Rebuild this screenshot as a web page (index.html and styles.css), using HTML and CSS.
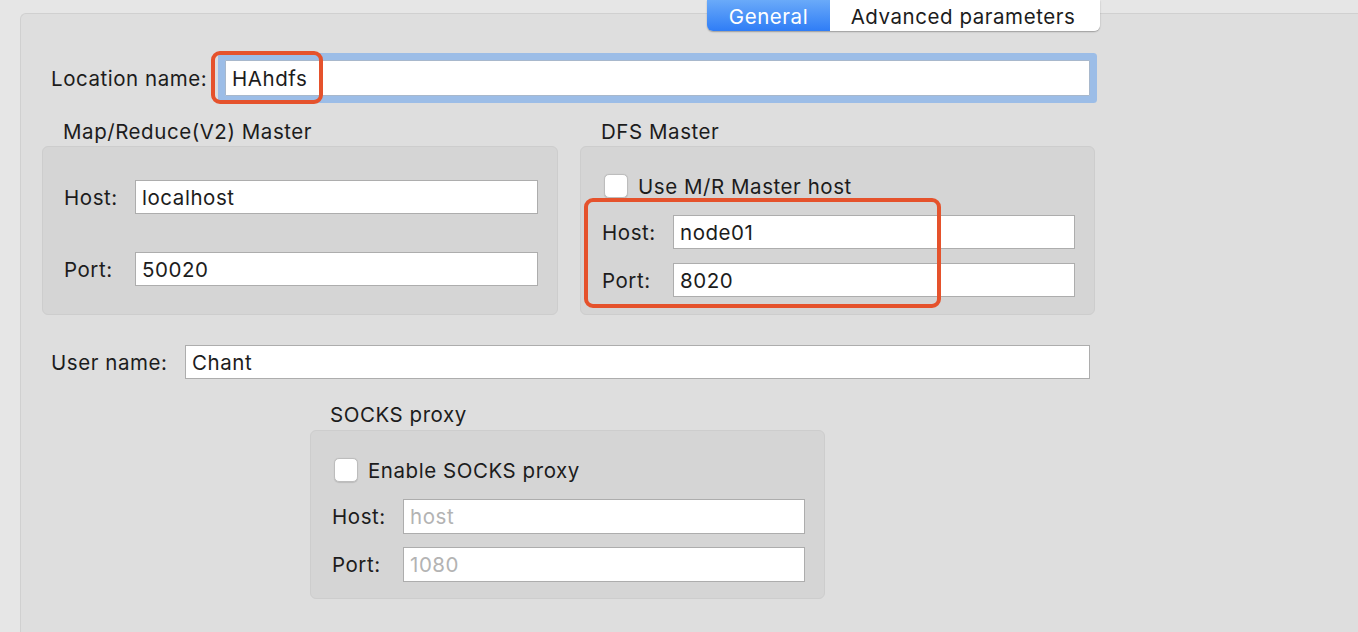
FILE: index.html
```html
<!DOCTYPE html>
<html>
<head>
<meta charset="utf-8">
<link rel="stylesheet" href="styles.css">
</head>
<body>
<div class="panel">
  <div class="tabs">
    <div class="tab tab-active">General</div>
    <div class="tab">Advanced parameters</div>
  </div>

  <div class="row row-location">
    <span class="label label-location">Location name:</span>
    <div class="field-wrap">
      <div class="input input-focus">HAhdfs</div>
      <div class="mark mark-location"></div>
    </div>
  </div>

  <div class="groups">
    <div class="group">
      <div class="group-title">Map/Reduce(V2) Master</div>
      <div class="group-box box-mr">
        <div class="line"><span class="label lbl-short">Host:</span><div class="input">localhost</div></div>
        <div class="line"><span class="label lbl-short">Port:</span><div class="input">50020</div></div>
      </div>
    </div>
    <div class="group">
      <div class="group-title">DFS Master</div>
      <div class="group-box box-dfs">
        <div class="check-line"><span class="checkbox"></span><span class="check-text">Use M/R Master host</span></div>
        <div class="line"><span class="label lbl-short">Host:</span><div class="input">node01</div></div>
        <div class="line"><span class="label lbl-short">Port:</span><div class="input">8020</div></div>
        <div class="mark mark-dfs"></div>
      </div>
    </div>
  </div>

  <div class="row row-user">
    <span class="label label-user">User name:</span>
    <div class="input input-user">Chant</div>
  </div>

  <div class="group group-socks">
    <div class="group-title">SOCKS proxy</div>
    <div class="group-box box-socks">
      <div class="check-line"><span class="checkbox"></span><span class="check-text">Enable SOCKS proxy</span></div>
      <div class="line"><span class="label lbl-short">Host:</span><div class="input input-disabled">host</div></div>
      <div class="line"><span class="label lbl-short">Port:</span><div class="input input-disabled">1080</div></div>
    </div>
  </div>
</div>
</body>
</html>
```

FILE: styles.css
```css
* { box-sizing: border-box; }
html, body { margin: 0; padding: 0; }
body {
  background: #e6e6e6;
  font-family: Inter, "Helvetica Neue", "Liberation Sans", sans-serif;
  font-size: 20.5px;
  letter-spacing: 0.55px;
  color: #1c1c1c;
  padding: 13px 0 0 20px;
  height: 632px;
  overflow: hidden;
}
.panel {
  background: #dedede;
  border-top: 1px solid #d0d0d0;
  border-left: 1px solid #d0d0d0;
  border-radius: 6px 0 0 0;
  height: 619px;
}
.tabs {
  display: flex;
  margin: -14px 0 0 686px;
  width: 393px;
  height: 31px;
  border-radius: 0 0 6px 6px;
  box-shadow: 0 1px 1.5px rgba(0,0,0,0.3);
  overflow: hidden;
}
.tab {
  background: #fff;
  width: 270px;
  display: flex;
  align-items: center;
  justify-content: center;
  padding-top: 2px;
  padding-right: 4px;
}
.tab-active {
  width: 123px;
  color: #fff;
  padding-right: 0;
  background: linear-gradient(#6aaaf9, #2f7df6);
}

.label { white-space: nowrap; }
.input {
  background: #fff;
  border: 1px solid #adadad;
  height: 34px;
  padding: 0 6px;
  display: flex;
  align-items: center;
  flex: 1;
  white-space: nowrap;
}

.row { display: flex; align-items: center; }
.row-location {
  margin-top: 29px;
  padding-left: 30px;
  width: 1069px;
}
.label-location { width: 174px; }
.field-wrap {
  position: relative;
  flex: 1;
}
.input-focus {
  height: 36px;
  box-shadow: 0 0 0 7px #9cbde7;
  border-radius: 1px;
  border-color: #a8b8cc;
}
.mark {
  position: absolute;
  border: 4px solid #e5522c;
  border-radius: 9px;
}
.mark-location {
  left: -14px;
  top: -9px;
  width: 112px;
  height: 53px;
}

.groups {
  display: grid;
  grid-template-columns: 516px 515px;
  column-gap: 22px;
  margin: 22px 0 0 21px;
}
.group-title {
  padding-left: 21px;
  height: 28px;
  line-height: 28px;
}
.group-box {
  background: #d5d5d5;
  border: 1px solid #cdcdcd;
  border-radius: 6px;
  position: relative;
}
.line {
  display: flex;
  align-items: center;
  padding-left: 21px;
  padding-right: 19px;
}
.lbl-short { width: 71px; }
.box-mr { height: 169px; padding-top: 33px; }
.box-mr .line + .line { margin-top: 38px; }
.box-dfs { height: 169px; padding-top: 27px; }
.box-dfs .line { margin-top: 17px; }
.box-dfs .line + .line { margin-top: 14px; }
.check-line {
  display: flex;
  align-items: center;
  padding-left: 23px;
  height: 24px;
}
.checkbox {
  width: 24px;
  height: 24px;
  background: #fff;
  border: 1px solid #bdbdbd;
  border-radius: 5px;
  margin-right: 10px;
  box-shadow: 0 0.5px 1px rgba(0,0,0,0.12);
}
.mark-dfs {
  left: 3px;
  top: 51px;
  width: 357px;
  height: 110px;
}

.row-user {
  margin-top: 30px;
  padding-left: 30px;
  width: 1069px;
}
.label-user { width: 134px; }
.input-user { height: 34px; }

.group-socks {
  width: 515px;
  margin: 21px 0 0 289px;
}
.group-socks .group-title { padding-left: 20px; height: 30px; line-height: 30px; }
.box-socks { height: 169px; padding-top: 27px; }
.box-socks .line { margin-top: 17px; }
.box-socks .line + .line { margin-top: 13px; }
.box-socks .input { height: 35px; }
.input-disabled { color: #b3b3b3; }
```
